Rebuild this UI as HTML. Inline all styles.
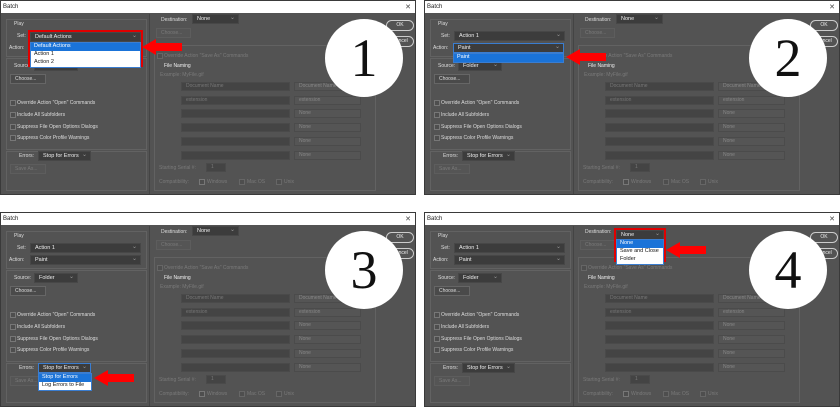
<!DOCTYPE html>
<html><head><meta charset="utf-8"><style>
*{margin:0;padding:0;box-sizing:border-box}
body{width:840px;height:406px;background:#fff;position:relative;overflow:hidden;font-family:"Liberation Sans",sans-serif;font-size:5px;color:#ddd}
.p{position:absolute;width:416px;height:195px;background:#535353;border:1px solid #3a3a3a;overflow:hidden}
.p div{position:absolute;white-space:nowrap;line-height:1}
.tb{left:0;top:0;width:416px;height:12px;background:#fff;color:#222;padding:3px 2px;font-size:6px}
.x{right:4px;top:3px;color:#444!important;font-size:7px}
.bx{border:1px solid #626262}
.dd{background:#3c3c3c;color:#eee;padding:2px 4px;height:10px;border:1px solid #474747;font-size:5.5px}
.dd:after{content:"⌄";position:absolute;right:3px;top:0;color:#999;font-size:6px}
.btn{background:#4a4a4a;border:1px solid #666;padding:2px 4px;height:10px}
.dis{color:#7a7a7a}
.dbtn{background:#555;border:1px solid #5d5d5d;color:#7a7a7a;padding:2px 4px;height:10px}
.cb{width:6px;height:6px;border:1px solid #777;background:#4e4e4e}
.fld{background:#444;border:1px solid #4a4a4a;height:9px;color:#777;padding:1px 4px}
.rd{background:#555;border:1px solid #4b4b4b;height:9px;color:#888;padding:1px 4px}
.ok{border:1px solid #ccc;border-radius:6px;width:28px;height:11px;text-align:center;padding-top:2px;color:#eee}
.c{width:78px;height:78px;border-radius:50%;background:#fff;color:#111;font-family:"Liberation Serif",serif;font-size:54px;text-align:center;line-height:78px!important}
.ls{background:#fff;color:#111;border:1px solid #3a7dd0;font-size:5.5px}
.ls div{position:static!important;padding:1px 3px;height:8px}
.hl{background:#1a73d8;color:#fff}
.red{border:2px solid #e00000}
.ar{width:40px;height:16px}
</style></head><body>

<div class="p" style="left:0;top:0">
<div class="tb">Batch</div><div class="x">✕</div>
<div class="bx" style="left:5px;top:18px;width:141px;height:38px"></div>
<div style="left:13px;top:21px">Play</div>
<div style="left:16px;top:33px">Set:</div><div class="dd" style="left:29px;top:30px;width:111px">Default Actions</div>
<div style="left:8px;top:45px">Action:</div><div class="dd" style="left:29px;top:42px;width:111px">Paint</div>
<div class="bx" style="left:5px;top:57px;width:141px;height:92px"></div>
<div style="left:13px;top:63px">Source:</div><div class="dd" style="left:33px;top:60px;width:44px">Folder</div>
<div class="btn" style="left:9px;top:73px;width:36px">Choose...</div>
<div class="cb" style="left:9px;top:99px"></div><div style="left:16px;top:100px">Override Action "Open" Commands</div>
<div class="cb" style="left:9px;top:111px"></div><div style="left:16px;top:112px">Include All Subfolders</div>
<div class="cb" style="left:9px;top:123px"></div><div style="left:16px;top:124px">Suppress File Open Options Dialogs</div>
<div class="cb" style="left:9px;top:134px"></div><div style="left:16px;top:135px">Suppress Color Profile Warnings</div>
<div class="bx" style="left:5px;top:150px;width:141px;height:40px"></div>
<div style="left:18px;top:153px">Errors:</div><div class="dd" style="left:37px;top:150px;width:53px">Stop for Errors</div>
<div class="dbtn" style="left:9px;top:163px;width:36px">Save As...</div>
<div style="left:148px;top:13px;width:1px;height:180px;background:#444"></div>
<div style="left:160px;top:17px">Destination:</div><div class="dd" style="left:191px;top:13px;width:47px">None</div>
<div class="dbtn" style="left:155px;top:27px;width:35px">Choose...</div>
<div class="bx" style="left:153px;top:44px;width:222px;height:146px"></div>
<div class="cb" style="left:156px;top:52px;border-color:#666"></div><div class="dis" style="left:163px;top:53px">Override Action "Save As" Commands</div>
<div style="left:163px;top:63px;color:#eee">File Naming</div>
<div class="dis" style="left:159px;top:72px">Example: MyFile.gif</div>
<div class="fld" style="left:180px;top:81px;width:109px">Document Name</div><div class="rd" style="left:293px;top:81px;width:67px">Document Name</div>
<div class="fld" style="left:180px;top:95px;width:109px">extension</div><div class="rd" style="left:293px;top:95px;width:67px">extension</div>
<div class="fld" style="left:180px;top:108px;width:109px"></div><div class="rd" style="left:293px;top:108px;width:67px">None</div>
<div class="fld" style="left:180px;top:122px;width:109px"></div><div class="rd" style="left:293px;top:122px;width:67px">None</div>
<div class="fld" style="left:180px;top:136px;width:109px"></div><div class="rd" style="left:293px;top:136px;width:67px">None</div>
<div class="fld" style="left:180px;top:150px;width:109px"></div><div class="rd" style="left:293px;top:150px;width:67px">None</div>
<div class="dis" style="left:158px;top:165px">Starting Serial #:</div><div class="fld" style="left:205px;top:162px;width:20px">1</div>
<div class="dis" style="left:158px;top:179px">Compatibility:</div>
<div class="cb" style="left:198px;top:178px"></div><div class="dis" style="left:206px;top:179px">Windows</div>
<div class="cb" style="left:238px;top:178px;border-color:#666"></div><div class="dis" style="left:246px;top:179px">Mac OS</div>
<div class="cb" style="left:275px;top:178px;border-color:#666"></div><div class="dis" style="left:283px;top:179px">Unix</div>
<div class="ok" style="left:385px;top:19px">OK</div><div class="ok" style="left:385px;top:35px">Cancel</div>
<div class="c" style="left:324px;top:18px">1</div>
<div class="red" style="left:27px;top:29px;width:115px;height:37px;background:#fff"></div>
<div class="dd" style="left:29px;top:31px;width:111px">Default Actions</div>
<div class="ls" style="left:29px;top:41px;width:111px"><div class="hl">Default Actions</div><div>Action 1</div><div>Action 2</div></div>
<svg class="ar" style="position:absolute;left:141px;top:38px" viewBox="0 0 40 16"><path d="M0 8 L14 0 L14 4 L40 4 L40 12 L14 12 L14 16Z" fill="#f00"/></svg>
</div>

<div class="p" style="left:424px;top:0">
<div class="tb">Batch</div><div class="x">✕</div>
<div class="bx" style="left:5px;top:18px;width:141px;height:38px"></div>
<div style="left:13px;top:21px">Play</div>
<div style="left:16px;top:33px">Set:</div><div class="dd" style="left:29px;top:30px;width:111px">Action 1</div>
<div style="left:8px;top:45px">Action:</div>
<div class="bx" style="left:5px;top:57px;width:141px;height:92px"></div>
<div style="left:13px;top:63px">Source:</div><div class="dd" style="left:33px;top:60px;width:44px">Folder</div>
<div class="btn" style="left:9px;top:73px;width:36px">Choose...</div>
<div class="cb" style="left:9px;top:99px"></div><div style="left:16px;top:100px">Override Action "Open" Commands</div>
<div class="cb" style="left:9px;top:111px"></div><div style="left:16px;top:112px">Include All Subfolders</div>
<div class="cb" style="left:9px;top:123px"></div><div style="left:16px;top:124px">Suppress File Open Options Dialogs</div>
<div class="cb" style="left:9px;top:134px"></div><div style="left:16px;top:135px">Suppress Color Profile Warnings</div>
<div class="bx" style="left:5px;top:150px;width:141px;height:40px"></div>
<div style="left:18px;top:153px">Errors:</div><div class="dd" style="left:37px;top:150px;width:53px">Stop for Errors</div>
<div class="dbtn" style="left:9px;top:163px;width:36px">Save As...</div>
<div style="left:148px;top:13px;width:1px;height:180px;background:#444"></div>
<div style="left:160px;top:17px">Destination:</div><div class="dd" style="left:191px;top:13px;width:47px">None</div>
<div class="dbtn" style="left:155px;top:27px;width:35px">Choose...</div>
<div class="bx" style="left:153px;top:44px;width:222px;height:146px"></div>
<div class="cb" style="left:156px;top:52px;border-color:#666"></div><div class="dis" style="left:163px;top:53px">Override Action "Save As" Commands</div>
<div style="left:163px;top:63px;color:#eee">File Naming</div>
<div class="dis" style="left:159px;top:72px">Example: MyFile.gif</div>
<div class="fld" style="left:180px;top:81px;width:109px">Document Name</div><div class="rd" style="left:293px;top:81px;width:67px">Document Name</div>
<div class="fld" style="left:180px;top:95px;width:109px">extension</div><div class="rd" style="left:293px;top:95px;width:67px">extension</div>
<div class="fld" style="left:180px;top:108px;width:109px"></div><div class="rd" style="left:293px;top:108px;width:67px">None</div>
<div class="fld" style="left:180px;top:122px;width:109px"></div><div class="rd" style="left:293px;top:122px;width:67px">None</div>
<div class="fld" style="left:180px;top:136px;width:109px"></div><div class="rd" style="left:293px;top:136px;width:67px">None</div>
<div class="fld" style="left:180px;top:150px;width:109px"></div><div class="rd" style="left:293px;top:150px;width:67px">None</div>
<div class="dis" style="left:158px;top:165px">Starting Serial #:</div><div class="fld" style="left:205px;top:162px;width:20px">1</div>
<div class="dis" style="left:158px;top:179px">Compatibility:</div>
<div class="cb" style="left:198px;top:178px"></div><div class="dis" style="left:206px;top:179px">Windows</div>
<div class="cb" style="left:238px;top:178px;border-color:#666"></div><div class="dis" style="left:246px;top:179px">Mac OS</div>
<div class="cb" style="left:275px;top:178px;border-color:#666"></div><div class="dis" style="left:283px;top:179px">Unix</div>
<div class="ok" style="left:385px;top:19px">OK</div><div class="ok" style="left:385px;top:35px">Cancel</div>
<div class="c" style="left:324px;top:18px">2</div>
<div class="dd" style="left:28px;top:42px;width:111px;border-color:#3a7dd0">Paint</div>
<div class="ls" style="left:28px;top:52px;width:111px"><div class="hl">Paint</div></div>
<div style="left:28px;top:61px;width:111px;height:1px;background:#3a7dd0"></div>
<svg class="ar" style="position:absolute;left:141px;top:48px" viewBox="0 0 40 16"><path d="M0 8 L14 0 L14 4 L40 4 L40 12 L14 12 L14 16Z" fill="#f00"/></svg>
</div>

<div class="p" style="left:0;top:212px">
<div class="tb">Batch</div><div class="x">✕</div>
<div class="bx" style="left:5px;top:18px;width:141px;height:38px"></div>
<div style="left:13px;top:21px">Play</div>
<div style="left:16px;top:33px">Set:</div><div class="dd" style="left:29px;top:30px;width:111px">Action 1</div>
<div style="left:8px;top:45px">Action:</div><div class="dd" style="left:29px;top:42px;width:111px">Paint</div>
<div class="bx" style="left:5px;top:57px;width:141px;height:92px"></div>
<div style="left:13px;top:63px">Source:</div><div class="dd" style="left:33px;top:60px;width:44px">Folder</div>
<div class="btn" style="left:9px;top:73px;width:36px">Choose...</div>
<div class="cb" style="left:9px;top:99px"></div><div style="left:16px;top:100px">Override Action "Open" Commands</div>
<div class="cb" style="left:9px;top:111px"></div><div style="left:16px;top:112px">Include All Subfolders</div>
<div class="cb" style="left:9px;top:123px"></div><div style="left:16px;top:124px">Suppress File Open Options Dialogs</div>
<div class="cb" style="left:9px;top:134px"></div><div style="left:16px;top:135px">Suppress Color Profile Warnings</div>
<div class="bx" style="left:5px;top:150px;width:141px;height:40px"></div>
<div style="left:18px;top:153px">Errors:</div>
<div class="dbtn" style="left:9px;top:163px;width:36px">Save As...</div>
<div style="left:148px;top:13px;width:1px;height:180px;background:#444"></div>
<div style="left:160px;top:17px">Destination:</div><div class="dd" style="left:191px;top:13px;width:47px">None</div>
<div class="dbtn" style="left:155px;top:27px;width:35px">Choose...</div>
<div class="bx" style="left:153px;top:44px;width:222px;height:146px"></div>
<div class="cb" style="left:156px;top:52px;border-color:#666"></div><div class="dis" style="left:163px;top:53px">Override Action "Save As" Commands</div>
<div style="left:163px;top:63px;color:#eee">File Naming</div>
<div class="dis" style="left:159px;top:72px">Example: MyFile.gif</div>
<div class="fld" style="left:180px;top:81px;width:109px">Document Name</div><div class="rd" style="left:293px;top:81px;width:67px">Document Name</div>
<div class="fld" style="left:180px;top:95px;width:109px">extension</div><div class="rd" style="left:293px;top:95px;width:67px">extension</div>
<div class="fld" style="left:180px;top:108px;width:109px"></div><div class="rd" style="left:293px;top:108px;width:67px">None</div>
<div class="fld" style="left:180px;top:122px;width:109px"></div><div class="rd" style="left:293px;top:122px;width:67px">None</div>
<div class="fld" style="left:180px;top:136px;width:109px"></div><div class="rd" style="left:293px;top:136px;width:67px">None</div>
<div class="fld" style="left:180px;top:150px;width:109px"></div><div class="rd" style="left:293px;top:150px;width:67px">None</div>
<div class="dis" style="left:158px;top:165px">Starting Serial #:</div><div class="fld" style="left:205px;top:162px;width:20px">1</div>
<div class="dis" style="left:158px;top:179px">Compatibility:</div>
<div class="cb" style="left:198px;top:178px"></div><div class="dis" style="left:206px;top:179px">Windows</div>
<div class="cb" style="left:238px;top:178px;border-color:#666"></div><div class="dis" style="left:246px;top:179px">Mac OS</div>
<div class="cb" style="left:275px;top:178px;border-color:#666"></div><div class="dis" style="left:283px;top:179px">Unix</div>
<div class="ok" style="left:385px;top:19px">OK</div><div class="ok" style="left:385px;top:35px">Cancel</div>
<div class="c" style="left:324px;top:18px">3</div>
<div class="dd" style="left:37px;top:150px;width:53px;border-color:#3a7dd0">Stop for Errors</div>
<div class="ls" style="left:37px;top:160px;width:54px"><div class="hl">Stop for Errors</div><div>Log Errors to File</div></div>
<svg class="ar" style="position:absolute;left:93px;top:157px" viewBox="0 0 40 16"><path d="M0 8 L14 0 L14 4 L40 4 L40 12 L14 12 L14 16Z" fill="#f00"/></svg>
</div>

<div class="p" style="left:424px;top:212px">
<div class="tb">Batch</div><div class="x">✕</div>
<div class="bx" style="left:5px;top:18px;width:141px;height:38px"></div>
<div style="left:13px;top:21px">Play</div>
<div style="left:16px;top:33px">Set:</div><div class="dd" style="left:29px;top:30px;width:111px">Action 1</div>
<div style="left:8px;top:45px">Action:</div><div class="dd" style="left:29px;top:42px;width:111px">Paint</div>
<div class="bx" style="left:5px;top:57px;width:141px;height:92px"></div>
<div style="left:13px;top:63px">Source:</div><div class="dd" style="left:33px;top:60px;width:44px">Folder</div>
<div class="btn" style="left:9px;top:73px;width:36px">Choose...</div>
<div class="cb" style="left:9px;top:99px"></div><div style="left:16px;top:100px">Override Action "Open" Commands</div>
<div class="cb" style="left:9px;top:111px"></div><div style="left:16px;top:112px">Include All Subfolders</div>
<div class="cb" style="left:9px;top:123px"></div><div style="left:16px;top:124px">Suppress File Open Options Dialogs</div>
<div class="cb" style="left:9px;top:134px"></div><div style="left:16px;top:135px">Suppress Color Profile Warnings</div>
<div class="bx" style="left:5px;top:150px;width:141px;height:40px"></div>
<div style="left:18px;top:153px">Errors:</div><div class="dd" style="left:37px;top:150px;width:53px">Stop for Errors</div>
<div class="dbtn" style="left:9px;top:163px;width:36px">Save As...</div>
<div style="left:148px;top:13px;width:1px;height:180px;background:#444"></div>
<div style="left:160px;top:17px">Destination:</div>
<div class="dbtn" style="left:155px;top:27px;width:35px">Choose...</div>
<div class="bx" style="left:153px;top:44px;width:222px;height:146px"></div>
<div class="cb" style="left:156px;top:52px;border-color:#666"></div><div class="dis" style="left:163px;top:53px">Override Action "Save As" Commands</div>
<div style="left:163px;top:63px;color:#eee">File Naming</div>
<div class="dis" style="left:159px;top:72px">Example: MyFile.gif</div>
<div class="fld" style="left:180px;top:81px;width:109px">Document Name</div><div class="rd" style="left:293px;top:81px;width:67px">Document Name</div>
<div class="fld" style="left:180px;top:95px;width:109px">extension</div><div class="rd" style="left:293px;top:95px;width:67px">extension</div>
<div class="fld" style="left:180px;top:108px;width:109px"></div><div class="rd" style="left:293px;top:108px;width:67px">None</div>
<div class="fld" style="left:180px;top:122px;width:109px"></div><div class="rd" style="left:293px;top:122px;width:67px">None</div>
<div class="fld" style="left:180px;top:136px;width:109px"></div><div class="rd" style="left:293px;top:136px;width:67px">None</div>
<div class="fld" style="left:180px;top:150px;width:109px"></div><div class="rd" style="left:293px;top:150px;width:67px">None</div>
<div class="dis" style="left:158px;top:165px">Starting Serial #:</div><div class="fld" style="left:205px;top:162px;width:20px">1</div>
<div class="dis" style="left:158px;top:179px">Compatibility:</div>
<div class="cb" style="left:198px;top:178px"></div><div class="dis" style="left:206px;top:179px">Windows</div>
<div class="cb" style="left:238px;top:178px;border-color:#666"></div><div class="dis" style="left:246px;top:179px">Mac OS</div>
<div class="cb" style="left:275px;top:178px;border-color:#666"></div><div class="dis" style="left:283px;top:179px">Unix</div>
<div class="ok" style="left:385px;top:19px">OK</div><div class="ok" style="left:385px;top:35px">Cancel</div>
<div class="c" style="left:324px;top:18px">4</div>
<div class="red" style="left:189px;top:15px;width:52px;height:34px;background:#fff"></div>
<div class="dd" style="left:191px;top:17px;width:48px">None</div>
<div class="ls" style="left:191px;top:26px;width:48px"><div class="hl">None</div><div>Save and Close</div><div>Folder</div></div>
<svg class="ar" style="position:absolute;left:241px;top:29px" viewBox="0 0 40 16"><path d="M0 8 L14 0 L14 4 L40 4 L40 12 L14 12 L14 16Z" fill="#f00"/></svg>
</div>

</body></html>
